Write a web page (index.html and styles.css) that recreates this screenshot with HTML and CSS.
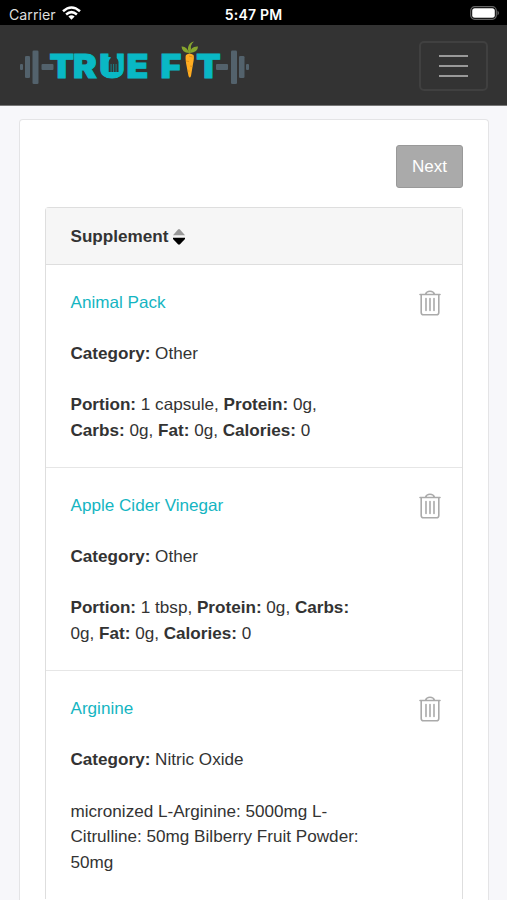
FILE: index.html
```html
<!DOCTYPE html>
<html lang="en">
<head>
<meta charset="utf-8">
<title>True Fit</title>
<link rel="stylesheet" href="styles.css">
</head>
<body>
<svg class="defs" aria-hidden="true">
  <symbol id="trash" viewBox="0 0 22 26">
    <g fill="none" stroke="#aaa" stroke-width="1.600" stroke-linecap="round" stroke-linejoin="round">
      <path d="M1 4.500H21M2.200 4.500V22.500Q2.200 24.800 4.500 24.800H17.500Q19.800 24.800 19.800 22.500V4.500M6.500 4.200Q7.500 1.200 11 1.200T15.500 4.200"/>
      <path d="M7 8.500V20.500M11 8.500V20.500M15 8.500V20.500"/>
    </g>
  </symbol>
</svg>
<header>
  <div class="status">
    <div class="carrier">
      <span>Carrier</span>
      <svg width="19" height="14" viewBox="0 0 19 14" fill="none" stroke="#fff" stroke-width="2.500">
        <path d="M1 5.300Q9.500-2.400 18 5.300M4.100 8.500Q9.500 3.800 14.900 8.500"/>
        <path d="M6.400 10.600Q9.500 8 12.600 10.600L9.500 13.700Z" fill="#fff" stroke="none"/>
      </svg>
    </div>
    <div class="time">5:47 PM</div>
    <svg class="battery" width="30" height="14" viewBox="0 0 30 14">
      <rect x=".7" y=".7" width="25.600" height="12.600" rx="4" fill="none" stroke="#666" stroke-width="1.200"/>
      <rect x="2.200" y="2.200" width="22.600" height="9.600" rx="2.500" fill="#fff"/>
      <path d="M27.500 4.500Q30.500 7 27.500 9.500Z" fill="#666"/>
    </svg>
  </div>
  <nav class="navbar">
    <svg class="logo" width="232" height="46" viewBox="0 0 232 46">
      <g fill="#53626c">
        <rect x="0" y="24" width="3" height="6" rx="1"/>
        <rect x="5" y="16" width="5" height="22" rx="1.300"/>
        <rect x="12.500" y="10.500" width="6" height="33.500" rx="1.300"/>
        <rect x="21.500" y="24" width="12" height="6" rx="1"/>
        <rect x="196" y="24" width="12" height="6" rx="1"/>
        <rect x="211" y="10.500" width="6" height="33.500" rx="1.300"/>
        <rect x="219" y="16" width="5.500" height="22" rx="1.300"/>
        <rect x="226" y="24" width="3" height="6" rx="1"/>
      </g>
      <text class="brand" transform="scale(1.080 1)" x="27.300 49 73.300 98.600 130 163.300" y="38">TRUEFT</text>
      <rect x="87" y="17" width="13" height="17" fill="#09b8c5"/>
      <path d="M90.700 13H96.700V18Q98.500 20 98.500 22V32H88.700V22Q88.700 20 90.700 18Z" fill="#333"/>
      <path d="M91.100 24V32M93.600 24V32M96.100 24V32" stroke="#158b93" stroke-width=".9"/>
      <path d="M166 15Q169.500 12 173.500 15Q174.500 17 173 24L171 36Q169.800 39 168.500 36L166.200 24Q165 17 166 15Z" fill="#ffac20"/>
      <path d="M169 16L172.500 17M166 21L169 21.500M170 26L172.500 26.500M167.500 31H169.500" stroke="#d98a12" stroke-width=".8"/>
      <path d="M169.500 14Q167 9 168.500 6Q170 2 174 1.500Q170 5 171 9L169.500 14M169 13Q162 12.500 161.500 6.500Q167 6 169 13M170 13Q170.500 6 178 6.500Q178 12 170 13" fill="#86a52e"/>
    </svg>
    <button class="menu" aria-label="Menu"><span></span><span></span><span></span></button>
  </nav>
</header>
<main class="card">
  <div class="actions"><button class="next">Next</button></div>
  <section class="list">
    <div class="heading">Supplement
      <svg width="12" height="16" viewBox="0 0 12 16"><path d="M0 6.300L5 .5Q6-.3 7 .5L12 6.300Z" fill="#999"/><path d="M0 8.800H12V10L7 15.300Q6 16 5 15.300L0 10Z" fill="#000"/></svg>
    </div>
    <article class="row">
      <div class="details">
        <a>Animal Pack</a>
        <p><b>Category:</b> Other</p>
        <p><b>Portion:</b> 1 capsule, <b>Protein:</b> 0g,<br><b>Carbs:</b> 0g, <b>Fat:</b> 0g, <b>Calories:</b> 0</p>
      </div>
      <svg class="trash"><use href="#trash"/></svg>
    </article>
    <article class="row">
      <div class="details">
        <a>Apple Cider Vinegar</a>
        <p><b>Category:</b> Other</p>
        <p><b>Portion:</b> 1 tbsp, <b>Protein:</b> 0g, <b>Carbs:</b><br>0g, <b>Fat:</b> 0g, <b>Calories:</b> 0</p>
      </div>
      <svg class="trash"><use href="#trash"/></svg>
    </article>
    <article class="row">
      <div class="details">
        <a>Arginine</a>
        <p><b>Category:</b> Nitric Oxide</p>
        <p>micronized L-Arginine: 5000mg L-<br>Citrulline: 50mg Bilberry Fruit Powder:<br>50mg</p>
      </div>
      <svg class="trash"><use href="#trash"/></svg>
    </article>
  </section>
</main>
</body>
</html>
```
FILE: styles.css
```css
* { box-sizing: border-box; }
body {
  margin: 0;
  height: 900px;
  overflow: hidden;
  display: flex;
  flex-direction: column;
  background: #f7f7fa;
  color: #333;
  font: 17.12px/25.7px "Liberation Sans", Arial, sans-serif;
}
button { font: inherit; padding: 0; }
.defs { display: none; }
.status {
  height: 25px;
  padding: 0 7px 0 9px;
  background: #000;
  color: #fff;
  display: grid;
  grid-template-columns: 1fr auto 1fr;
  align-items: center;
  font: 14.2px/25px Inter, sans-serif;
}
.carrier { display: flex; align-items: center; gap: 6px; color: #ddd; }
.carrier svg { margin-top: -2px; }
.time { font-weight: 600; font-size: 14px; padding-right: 2px; letter-spacing: .2px; }
.carrier span, .time { padding-top: 2px; }
.battery { justify-self: end; margin-top: -1px; }
.navbar {
  height: 81px;
  padding: 1px 19px 0 20px;
  background: #333;
  border-bottom: 1px solid #777;
  display: flex;
  align-items: center;
  justify-content: space-between;
}
.logo { margin-bottom: 5px; }
.brand { font: 900 33px Inter, sans-serif; fill: #09b8c5; stroke: #09b8c5; stroke-width: 1px; }
.menu {
  width: 69px;
  height: 50px;
  background: transparent;
  border: 2px solid #404040;
  border-radius: 5px;
  display: flex;
  flex-direction: column;
  align-items: center;
  justify-content: center;
  gap: 8px;
}
.menu span { width: 29px; height: 2px; background: #999; }
.card {
  flex: 1;
  min-height: 0;
  overflow: hidden;
  margin: 13px 18px 0 19px;
  padding: 25px 25px 0;
  background: #fff;
  border: 1px solid #e4e4e6;
  border-bottom: 0;
  border-radius: 4px 4px 0 0;
}
.actions { display: flex; justify-content: flex-end; margin-bottom: 19px; }
.next { width: 67px; height: 43px; border: 1px solid #999; border-radius: 3px; background: #aaa; color: #fff; }
.list { border: 1px solid #dedede; border-bottom: 0; border-radius: 4px 4px 0 0; }
.heading {
  height: 57px;
  padding: 1px 24.5px 0;
  background: #f6f6f6;
  border-bottom: 1px solid #dedede;
  display: flex;
  align-items: center;
  gap: 5px;
  font-weight: bold;
}
.row {
  min-height: 203.2px;
  padding: 24.5px 21px 23.5px 24.5px;
  border-bottom: 1px solid #e6e6e6;
  display: flex;
  justify-content: space-between;
  align-items: flex-start;
}
.row:last-child { border-bottom: 0; }
.row a { color: #14b5c2; }
.row p { margin: 25.7px 0 0; }
.trash { width: 22px; height: 26px; }
```
